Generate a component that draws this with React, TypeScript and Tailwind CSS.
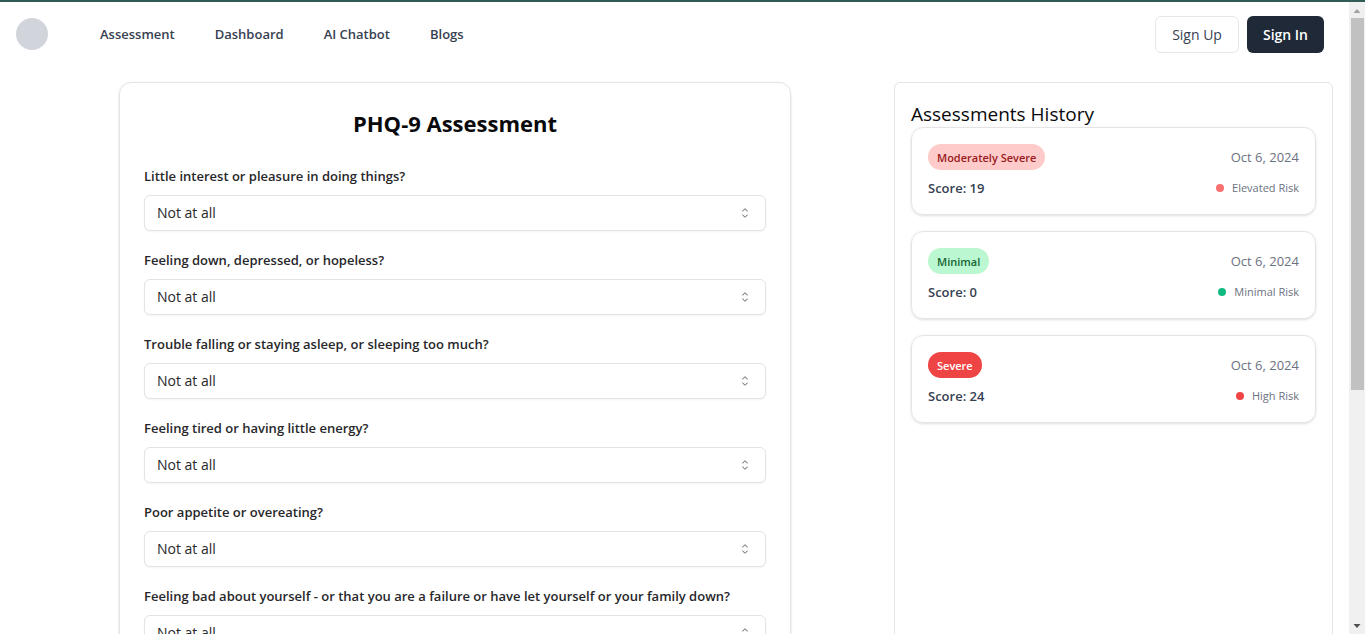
import { useState } from "react";

const navLinks = ["Assessment", "Dashboard", "AI Chatbot", "Blogs"];

const questions = [
  "Little interest or pleasure in doing things?",
  "Feeling down, depressed, or hopeless?",
  "Trouble falling or staying asleep, or sleeping too much?",
  "Feeling tired or having little energy?",
  "Poor appetite or overeating?",
  "Feeling bad about yourself - or that you are a failure or have let yourself or your family down?",
];

const options = ["Not at all", "Several days", "More than half the days", "Nearly every day"];

const history = [
  { level: "Moderately Severe", score: 19, date: "Oct 6, 2024", risk: "Elevated Risk", badge: "bg-[#fecaca] text-[#991b1b]", dot: "bg-[#f87171]" },
  { level: "Minimal", score: 0, date: "Oct 6, 2024", risk: "Minimal Risk", badge: "bg-[#bbf7d0] text-[#166534]", dot: "bg-[#10b981]" },
  { level: "Severe", score: 24, date: "Oct 6, 2024", risk: "High Risk", badge: "bg-[#ef4444] text-white", dot: "bg-[#ef4444]" },
];

function Header() {
  return (
    <header className="flex h-16 items-center pr-[25px] pl-4">
      <div className="size-8 rounded-full bg-[#d1d5db]" />
      <nav className="ml-[52px] flex flex-1 gap-10">
        {navLinks.map((label) => (
          <a key={label} href="#" className="text-[13px] leading-5 font-semibold text-[#374151]">
            {label}
          </a>
        ))}
      </nav>
      <div className="flex gap-2">
        <button className="h-[37px] rounded-md border border-[#e5e7eb] px-4 pt-0.5 text-sm font-medium text-[#374151]">
          Sign Up
        </button>
        <button className="h-[37px] rounded-md bg-[#1f2937] px-4 pt-0.5 text-sm font-semibold text-white">Sign In</button>
      </div>
    </header>
  );
}

function Question({ id, text }: { id: string; text: string }) {
  const [value, setValue] = useState(options[0]);
  return (
    <div className="flex flex-col gap-2.5">
      <label htmlFor={id} className="text-[13px] leading-[18px] font-semibold text-[#27272a]">
        {text}
      </label>
      <div className="relative">
        <select
          id={id}
          value={value}
          onChange={(e) => setValue(e.target.value)}
          className="h-9 w-full appearance-none rounded-md border border-[#e4e4e7] bg-white px-3 text-sm text-[#27272a] shadow-xs"
        >
          {options.map((option) => (
            <option key={option}>{option}</option>
          ))}
        </select>
        <svg
          viewBox="0 0 15 15"
          className="pointer-events-none absolute top-1/2 right-[13px] size-4 -translate-y-1/2 text-[#09090b] opacity-50"
          fill="currentColor"
          aria-hidden="true"
        >
          <path
            fillRule="evenodd"
            clipRule="evenodd"
            d="M4.93179 5.43179C4.75605 5.60753 4.75605 5.89245 4.93179 6.06819C5.10753 6.24392 5.39245 6.24392 5.56819 6.06819L7.49999 4.13638L9.43179 6.06819C9.60753 6.24392 9.89245 6.24392 10.0682 6.06819C10.2439 5.89245 10.2439 5.60753 10.0682 5.43179L7.81819 3.18179C7.73379 3.0974 7.61933 3.04999 7.49999 3.04999C7.38064 3.04999 7.26618 3.0974 7.18179 3.18179L4.93179 5.43179ZM10.0682 9.56819C10.2439 9.39245 10.2439 9.10753 10.0682 8.93179C9.89245 8.75606 9.60753 8.75606 9.43179 8.93179L7.49999 10.8636L5.56819 8.93179C5.39245 8.75606 5.10753 8.75606 4.93179 8.93179C4.75605 9.10753 4.75605 9.39245 4.93179 9.56819L7.18179 11.8182C7.35753 11.9939 7.64245 11.9939 7.81819 11.8182L10.0682 9.56819Z"
          />
        </svg>
      </div>
    </div>
  );
}

function HistoryPanel() {
  return (
    <aside className="rounded-md border border-[#e4e4e7] p-4">
      <h2 className="pt-0.5 text-[19px] leading-[26px] font-medium text-[#09090b]">Assessments History</h2>
      <ul className="flex flex-col gap-4">
        {history.map((item) => (
          <li key={item.level} className="flex flex-col gap-2 rounded-xl border border-[#e4e4e7] p-4 shadow">
            <div className="flex items-center justify-between">
              <span className={`flex h-[26px] items-center rounded-full px-[9px] pt-0.5 text-[11px] font-semibold ${item.badge}`}>
                {item.level}
              </span>
              <span className="text-[13px] leading-5 text-[#6b7280]">{item.date}</span>
            </div>
            <div className="flex items-center justify-between">
              <span className="text-[13px] leading-5 font-semibold text-[#374151]">Score: {item.score}</span>
              <span className="flex items-center gap-2 text-[11px] leading-5 text-[#6b7280]">
                <span className={`size-2 rounded-full ${item.dot}`} />
                {item.risk}
              </span>
            </div>
          </li>
        ))}
      </ul>
    </aside>
  );
}

function ScrollTrack() {
  return (
    <div className="flex w-4 shrink-0 flex-col items-center bg-[#f0f0f0]" aria-hidden="true">
      <svg viewBox="0 0 16 16" className="size-4 shrink-0">
        <path d="M4.5 11 8 7l3.5 4z" fill="#a3a3a3" />
      </svg>
      <div className="w-full flex-1 pr-px pl-0.5">
        <div className="h-[62%] bg-[#c1c1c1]" />
      </div>
      <svg viewBox="0 0 16 16" className="size-4 shrink-0">
        <path d="M4.5 6h7L8 10z" fill="#505050" />
      </svg>
    </div>
  );
}

export default function App() {
  return (
    <div className="flex h-screen flex-col bg-white font-['Open_Sans','Noto_Sans',sans-serif] text-[#09090b]">
      <div className="h-0.5 shrink-0 bg-[#2f5d55]" />
      <div className="flex min-h-0 flex-1">
        <div className="min-w-0 flex-1 overflow-y-auto [scrollbar-width:none]">
          <Header />
          <main className="grid grid-cols-3 p-4">
            <div className="col-span-2">
              <form className="mx-auto max-w-2xl rounded-xl border border-[#e4e4e7] p-6 shadow">
                <h1 className="text-center text-[22px] leading-8 font-bold">PHQ-9 Assessment</h1>
                <div className="mt-7 flex flex-col gap-5">
                  {questions.map((text, i) => (
                    <Question key={text} id={`question-${i + 1}`} text={text} />
                  ))}
                </div>
              </form>
            </div>
            <HistoryPanel />
          </main>
        </div>
        <ScrollTrack />
      </div>
    </div>
  );
}
